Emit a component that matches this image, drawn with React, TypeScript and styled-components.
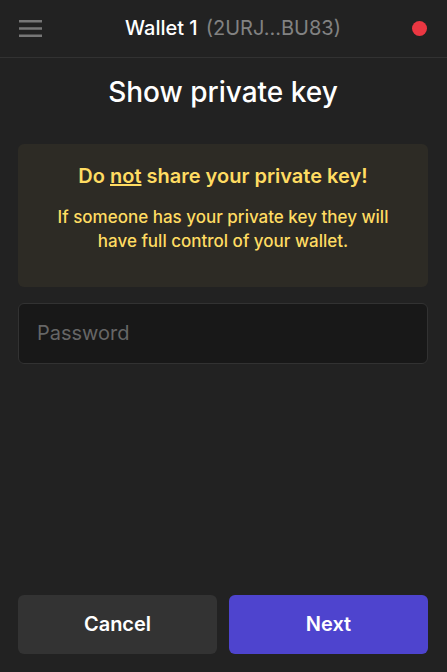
import React from "react";
import styled, { createGlobalStyle } from "styled-components";

const GlobalStyle = createGlobalStyle`
  *, *::before, *::after { box-sizing: border-box; }
  body {
    margin: 0;
    background: #222222;
    color: #ffffff;
    font-family: Inter, "Liberation Sans", sans-serif;
  }
`;

const Page = styled.div`
  min-height: 100vh;
  display: flex;
  flex-direction: column;
`;

const Header = styled.header`
  display: flex;
  align-items: center;
  justify-content: space-between;
  height: 58px;
  padding: 0 20px 0 18px;
  border-bottom: 1px solid #323232;
`;

const IconButton = styled.button`
  display: flex;
  padding: 0;
  border: 0;
  background: none;
  color: #777777;
  cursor: pointer;
`;

const WalletName = styled.div`
  display: flex;
  gap: 8px;
  padding: 0 0 2px 12px;
  font-size: 20px;
  line-height: 24px;
  font-weight: 500;
`;

const Address = styled.span`
  color: #828282;
  font-weight: 400;
`;

const StatusDot = styled.span`
  width: 15px;
  height: 15px;
  border-radius: 50%;
  background: #eb3742;
`;

const Form = styled.form`
  flex: 1;
  display: flex;
  flex-direction: column;
  padding: 16px 19px 18px 18px;
`;

const Title = styled.h1`
  margin: 0 0 34px;
  font-size: 28px;
  line-height: 36px;
  font-weight: 500;
  text-align: center;
`;

const Warning = styled.section`
  margin-bottom: 16px;
  padding: 18px 32px 34px;
  border-radius: 6px;
  background: #2d2b25;
  color: #ffdc62;
  text-align: center;
`;

const WarningTitle = styled.h2`
  margin: 0 0 15px;
  font-size: 20px;
  line-height: 28px;
  font-weight: 600;
`;

const WarningText = styled.p`
  margin: 0;
  font-size: 17px;
  line-height: 24px;
  font-weight: 500;
`;

const PasswordInput = styled.input`
  width: 100%;
  height: 61px;
  padding: 0 18px 2px;
  border: 1px solid #323232;
  border-radius: 6px;
  outline: none;
  background: #181818;
  color: #ffffff;
  font: inherit;
  font-size: 20px;

  &::placeholder { color: #666666; opacity: 1; }
`;

const Actions = styled.div`
  display: grid;
  grid-template-columns: 1fr 1fr;
  gap: 12px;
  margin-top: auto;
`;

const Button = styled.button<{ $primary?: boolean }>`
  height: 59px;
  padding: 0 0 2px;
  border: 0;
  border-radius: 6px;
  background: ${({ $primary }) => ($primary ? "#4e44ce" : "#333333")};
  color: #ffffff;
  font: inherit;
  font-size: 20px;
  font-weight: 600;
  cursor: pointer;
`;

export default function App() {
  return (
    <Page>
      <GlobalStyle />
      <Header>
        <IconButton type="button" aria-label="Menu">
          <svg width="24" height="17" viewBox="0 0 24 17" fill="currentColor" aria-hidden="true">
            <path d="M1 0h23v2.4H1zM1 7.3h23v2.4H1zM1 14.6h23v2.4H1z" />
          </svg>
        </IconButton>
        <WalletName>
          <span>Wallet 1</span>
          <Address>(2URJ...BU83)</Address>
        </WalletName>
        <StatusDot />
      </Header>
      <Form onSubmit={(event) => event.preventDefault()}>
        <Title>Show private key</Title>
        <Warning>
          <WarningTitle>
            Do <u>not</u> share your private key!
          </WarningTitle>
          <WarningText>
            If someone has your private key they will have full control of your wallet.
          </WarningText>
        </Warning>
        <PasswordInput type="password" placeholder="Password" aria-label="Password" />
        <Actions>
          <Button type="button">Cancel</Button>
          <Button type="submit" $primary>Next</Button>
        </Actions>
      </Form>
    </Page>
  );
}
